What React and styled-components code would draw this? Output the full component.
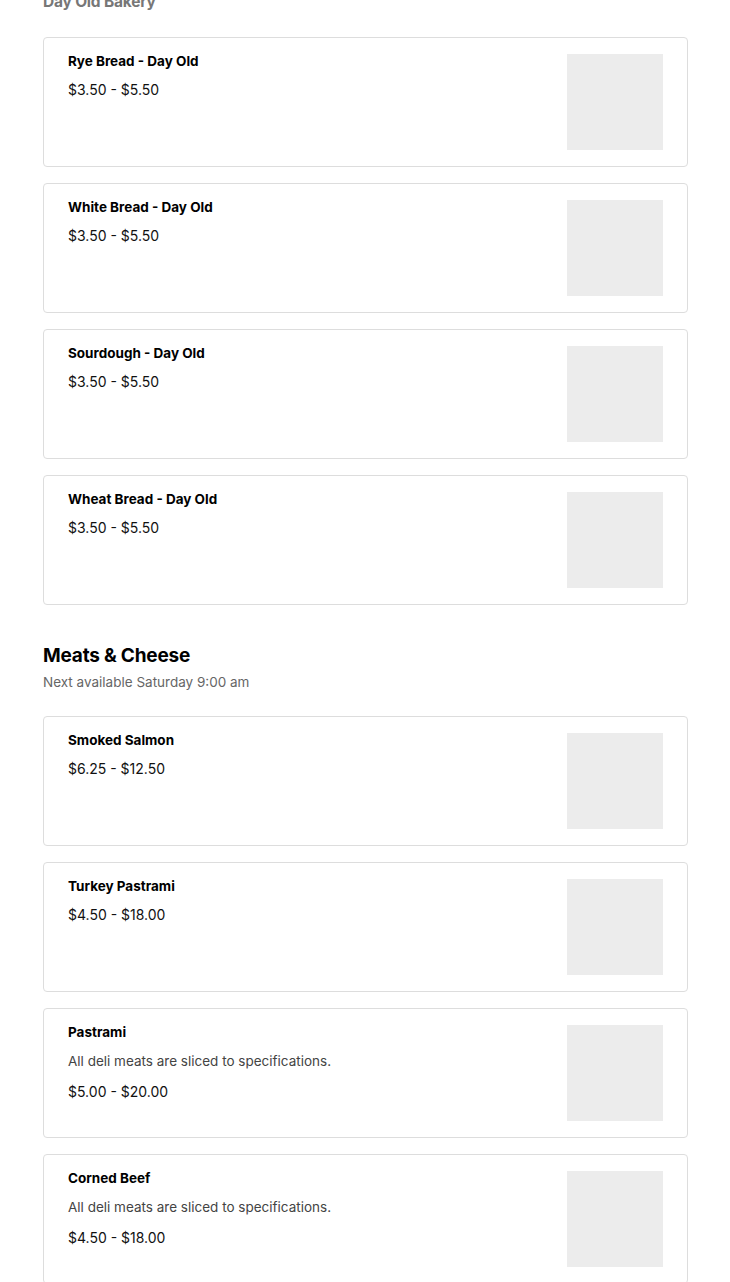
import React from 'react'
import styled, {createGlobalStyle} from "styled-components";

const GlobalStyle = createGlobalStyle `
  body {
    margin: 0;
    background: #fff;
    font-family: Inter, Roboto, "Liberation Sans", Arial, sans-serif;
    color: #000;
  }
`;

const Page = styled.div `
  padding: 0 42px 40px 43px;
  margin-top: -8px;
`;

const Section = styled.section `
  & + & {
    margin-top: 39px;
  }
`;

const SectionTitle = styled.h2 `
  margin: 0;
  font-size: ${ (props) => props.faded ? "15.5px" : "19px"};
  line-height: ${ (props) => props.faded ? "20px" : "24px"};
  font-weight: 700;
  letter-spacing: -0.2px;
  color: ${ (props) => props.faded ? "#777" : "#000"};
`;

const Subtitle = styled.p `
  margin: 4px 0 0;
  font-size: 13.5px;
  line-height: 20px;
  color: #666;
`;

const List = styled.div `
  display: flex;
  flex-direction: column;
  gap: 16px;
  margin-top: ${ (props) => props.tight ? "25px" : "24px"};
`;

const Card = styled.div `
  display: flex;
  justify-content: space-between;
  align-items: flex-start;
  border: 1px solid #ddd;
  border-radius: 4px;
  padding: 16px 24px;
  background: #fff;
`;

const Info = styled.div `
  display: flex;
  flex-direction: column;
  gap: 11px;
`;

const ItemName = styled.div `
  font-size: 13.5px;
  line-height: 14px;
  font-weight: 650;
  margin-bottom: 1px;
`;

const Desc = styled.div `
  font-size: 13.5px;
  line-height: 20px;
  color: #444;
`;

const Price = styled.div `
  font-size: 14px;
  line-height: 20px;
  color: #111;
`;

const Thumb = styled.div `
  width: 96px;
  height: 96px;
  flex-shrink: 0;
  background: #ececec;
`;

const sections = [
    {
        id: 'bakery',
        title: 'Day Old Bakery',
        faded: true,
        items: [
            {name: 'Rye Bread - Day Old', price: '$3.50 - $5.50'},
            {name: 'White Bread - Day Old', price: '$3.50 - $5.50'},
            {name: 'Sourdough - Day Old', price: '$3.50 - $5.50'},
            {name: 'Wheat Bread - Day Old', price: '$3.50 - $5.50'}
        ]
    }, {
        id: 'meats',
        title: 'Meats & Cheese',
        subtitle: 'Next available Saturday 9:00 am',
        items: [
            {name: 'Smoked Salmon', price: '$6.25 - $12.50'},
            {name: 'Turkey Pastrami', price: '$4.50 - $18.00'},
            {name: 'Pastrami', desc: 'All deli meats are sliced to specifications.', price: '$5.00 - $20.00'},
            {name: 'Corned Beef', desc: 'All deli meats are sliced to specifications.', price: '$4.50 - $18.00'}
        ]
    }
];

const App = () => {
    return (
        <>
            <GlobalStyle/>
            <Page>
                {sections.map((section) => (
                    <Section key={section.id}>
                        <SectionTitle faded={section.faded}>{section.title}</SectionTitle>
                        {section.subtitle && <Subtitle>{section.subtitle}</Subtitle>}
                        <List tight={!section.subtitle}>
                            {section.items.map((item) => (
                                <Card key={item.name}>
                                    <Info>
                                        <ItemName>{item.name}</ItemName>
                                        {item.desc && <Desc>{item.desc}</Desc>}
                                        <Price>{item.price}</Price>
                                    </Info>
                                    <Thumb/>
                                </Card>
                            ))}
                        </List>
                    </Section>
                ))}
            </Page>
        </>
    );
};

export default App
